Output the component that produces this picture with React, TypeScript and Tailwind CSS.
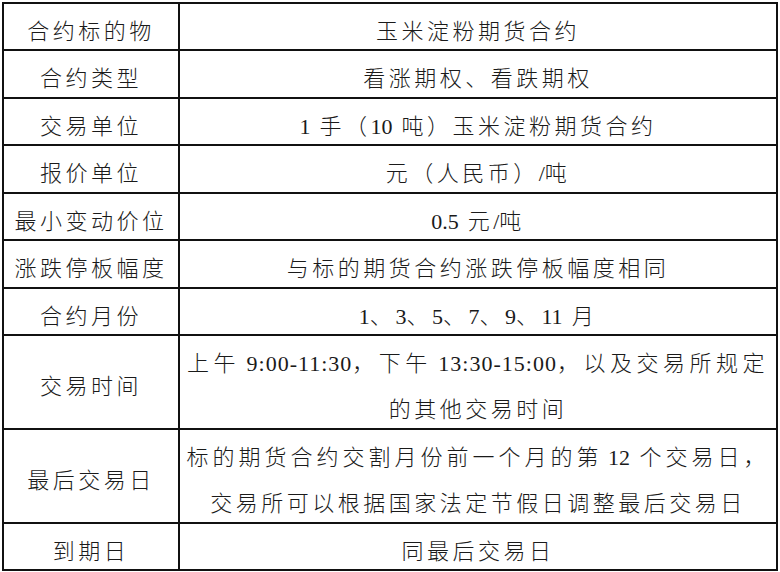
import type { ReactNode } from "react";

// Latin runs keep their natural spacing, CJK characters get the wider grid spacing
const L = ({ children, className = "tracking-normal" }: { children: ReactNode; className?: string }) => (
  <span className={className}>{children}</span>
);

type Row = { h: string; label: string; value: ReactNode };

const rows: Row[] = [
  { h: "h-[45px]", label: "合约标的物", value: "玉米淀粉期货合约" },
  { h: "h-[46px]", label: "合约类型", value: "看涨期权、看跌期权" },
  {
    h: "h-[45px]",
    label: "交易单位",
    value: (
      <>
        <L>1</L> 手（<L>10</L> 吨）玉米淀粉期货合约
      </>
    ),
  },
  {
    h: "h-[46px]",
    label: "报价单位",
    value: (
      <>
        元（人民币）<L>/</L>吨
      </>
    ),
  },
  {
    h: "h-[45px]",
    label: "最小变动价位",
    value: (
      <>
        <L>0.5</L> 元<L>/</L>吨
      </>
    ),
  },
  { h: "h-[46px]", label: "涨跌停板幅度", value: "与标的期货合约涨跌停板幅度相同" },
  {
    h: "h-[45px]",
    label: "合约月份",
    value: (
      <>
        <L>1</L>、<L>3</L>、<L>5</L>、<L>7</L>、<L>9</L>、<L>11</L> 月
      </>
    ),
  },
  {
    h: "h-[92px]",
    label: "交易时间",
    value: (
      <>
        <span className="whitespace-nowrap tracking-[4.5px]">
          上午<L className="tracking-[1px]"> 9:00-11:30</L>，下午
          <L className="tracking-[1px]"> 13:30-15:00</L>，以及交易所规定
        </span>
        <br />
        的其他交易时间
      </>
    ),
  },
  {
    h: "h-[92px]",
    label: "最后交易日",
    value: (
      <>
        <span className="whitespace-nowrap tracking-[4px]">
          标的期货合约交割月份前一个月的第<L> 12</L> 个交易日，
        </span>
        <br />
        交易所可以根据国家法定节假日调整最后交易日
      </>
    ),
  },
  { h: "h-[45px]", label: "到期日", value: "同最后交易日" },
];

export default function App() {
  return (
    <div className="w-[780px] h-[572px] bg-white pt-[2px] pl-[2px] overflow-hidden">
      <div
        className={
          'grid w-[776px] grid-cols-[174px_596px] gap-[2px] border-2 border-[#111] bg-[#111] ' +
          'font-["Liberation_Serif","Noto_Sans_CJK_SC",serif] text-[22px] font-light text-[#1a1a1a] tracking-[3.5px]'
        }
      >
        {rows.map((r) => (
          <div key={r.label} className="contents">
            <div
              className={`${r.h} flex items-center justify-center bg-white pt-[10px] leading-[46px] whitespace-nowrap`}
            >
              {r.label}
            </div>
            <div
              className={`${r.h} flex items-center justify-center bg-white pt-[10px] leading-[46px] text-center`}
            >
              <div>{r.value}</div>
            </div>
          </div>
        ))}
      </div>
    </div>
  );
}
